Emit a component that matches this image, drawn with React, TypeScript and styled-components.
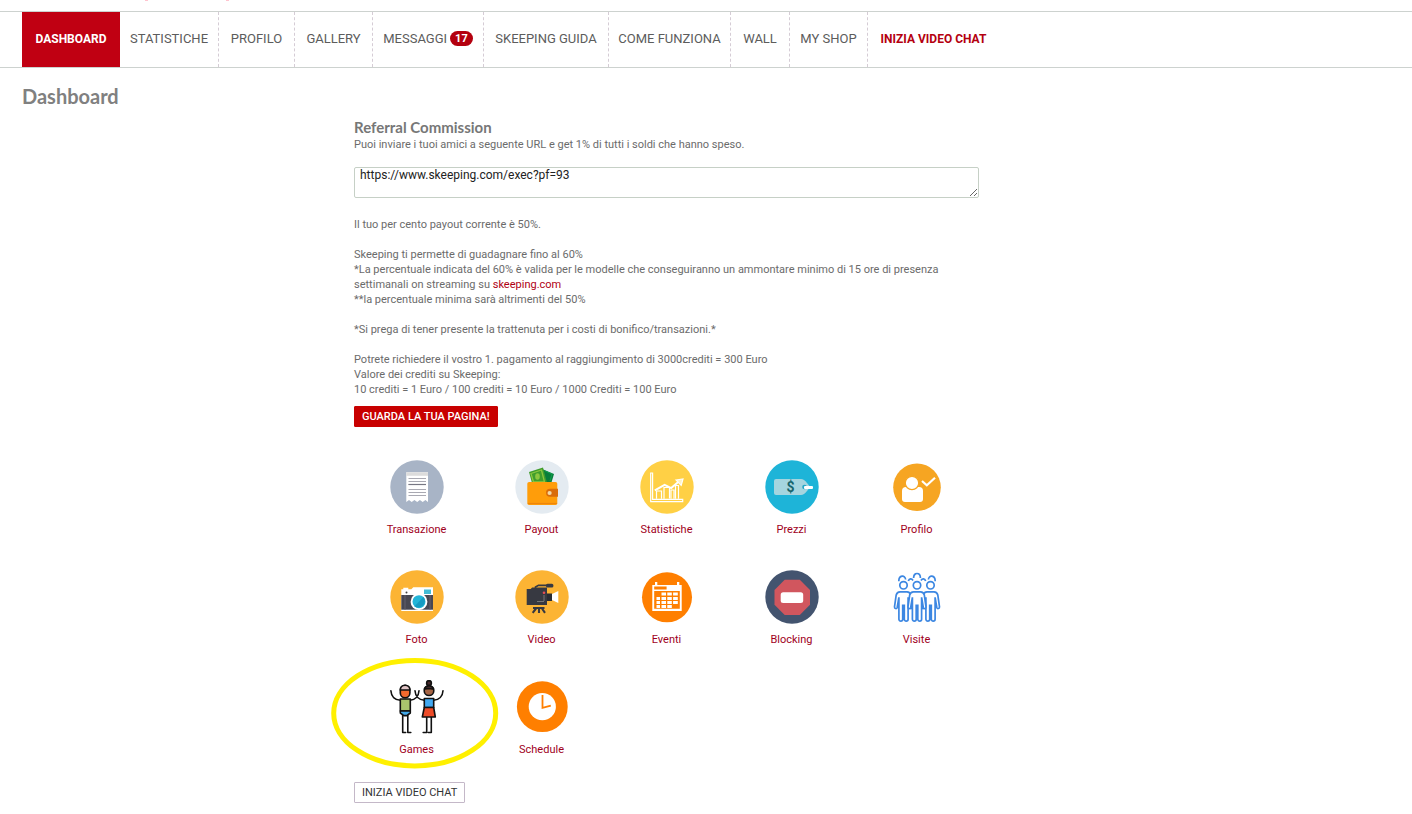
import React from 'react';
import styled, { createGlobalStyle, css } from 'styled-components';

const GlobalStyle = createGlobalStyle`
  *, *::before, *::after { box-sizing: border-box; }
  body {
    margin: 0;
    background: #fff;
    color: #6b6b6b;
    font: 11px/15px Roboto, "Liberation Sans", sans-serif;
  }
`;

const TopStrip = styled.header`
  display: flex;
  gap: 78px;
  height: 11px;
  padding-left: 145px;
`;

const TopMark = styled.span`
  width: 3px;
  height: 1px;
  background: #ffc4cf;
`;

const Nav = styled.nav`
  border-top: 1px solid #cdd2cf;
  border-bottom: 1px solid #cdd2cf;
  padding: 0 22px;
`;

const NavList = styled.ul`
  display: flex;
  margin: 0;
  padding: 0;
  list-style: none;
`;

const NavItem = styled.li<{ $width: number }>`
  flex: 0 0 ${(p) => p.$width}px;
  border-right: 1px dashed #d5ccd5;
  &:first-child,
  &:last-child { border-right: 0; }
`;

const NavLink = styled.a<{ $tone?: 'active' | 'accent' }>`
  display: flex;
  align-items: center;
  justify-content: center;
  gap: 3px;
  height: 55px;
  padding-bottom: 2px;
  color: #5c5c5c;
  font-size: 13px;
  line-height: 16px;
  white-space: nowrap;
  text-decoration: none;
  ${(p) => p.$tone === 'active' && css`
    background: #c00012;
    color: #fff;
    font-size: 12px;
    font-weight: 700;
  `}
  ${(p) => p.$tone === 'accent' && css`
    color: #b4000f;
    font-size: 12px;
    font-weight: 700;
  `}
`;

const Badge = styled.span`
  padding: 0 5px;
  border-radius: 8px;
  background: #b4000f;
  color: #fff;
  font-size: 11px;
  font-weight: 700;
  line-height: 15px;
`;

const Page = styled.main`
  max-width: 1333px;
  padding: 15px 22px 11px;
`;

const PageTitle = styled.h1`
  margin: 0;
  color: #808080;
  font: 700 20px/26px Lato, sans-serif;
`;

const Content = styled.section`
  max-width: 625px;
  margin: 9px auto 0;
`;

const SectionTitle = styled.h2`
  margin: 0 0 1px;
  color: #777;
  font: 700 15px/18px Lato, sans-serif;
`;

const Text = styled.p<{ $last?: boolean }>`
  margin: 0 0 ${(p) => (p.$last ? 9 : 15)}px;
`;

const UrlBox = styled.textarea`
  display: block;
  width: 100%;
  height: 31px;
  margin-bottom: 19px;
  padding: 0 5px;
  border: 1px solid #c6d0c6;
  border-radius: 2px;
  color: #222;
  font: inherit;
  font-size: 12px;
  overflow: hidden;
  resize: both;
`;

const TextLink = styled.a`
  color: #b00014;
  text-decoration: none;
`;

const Button = styled.button<{ $primary?: boolean }>`
  display: block;
  height: 21px;
  padding: 0 7px;
  border: 1px solid #c4b8c8;
  border-radius: 1px;
  background: #fff;
  color: #333;
  font: inherit;
  line-height: 19px;
  cursor: pointer;
  ${(p) => p.$primary && css`
    border-color: #c80000;
    background: #c80000;
    color: #fff;
    font-weight: 500;
  `}
`;

const Tiles = styled.div`
  display: grid;
  grid-template-columns: repeat(5, 1fr);
  row-gap: 33px;
  margin: 33px 0 25px;
`;

const Tile = styled.a`
  position: relative;
  display: flex;
  flex-direction: column;
  align-items: center;
  gap: 8px;
  color: #a0001c;
  text-decoration: none;
`;

const TileIcon = styled.svg`
  display: block;
  width: 54px;
  height: 54px;
`;

const Ring = styled.svg`
  position: absolute;
  top: -22px;
  left: -23px;
  width: 168px;
  height: 111px;
  pointer-events: none;
`;

const navItems: { label: string; width: number; tone?: 'active' | 'accent'; count?: number }[] = [
  { label: 'DASHBOARD', width: 98, tone: 'active' },
  { label: 'STATISTICHE', width: 99 },
  { label: 'PROFILO', width: 76 },
  { label: 'GALLERY', width: 78 },
  { label: 'MESSAGGI', width: 111, count: 17 },
  { label: 'SKEEPING GUIDA', width: 125 },
  { label: 'COME FUNZIONA', width: 122 },
  { label: 'WALL', width: 59 },
  { label: 'MY SHOP', width: 78 },
  { label: 'INIZIA VIDEO CHAT', width: 131, tone: 'accent' },
];

const Receipt = () => (
  <>
    <circle cx="27" cy="27" r="26.7" fill="#a8b4c6" />
    <path d="M16.3 12.3H38V42l-2.6-2-2.7 2-2.8-2-2.7 2-2.8-2-2.7 2-2.7-2-2.7 2Z" fill="#fff" />
    <path d="M16.3 12.3H38v3.5H16.3Z" fill="#dcdcdc" />
    <path d="M18.5 18.5H36M18.5 21.5H36M18.5 24.5H36M18.5 29.5H36M18.5 32.5H36M18.5 35.5H36" stroke="#a9a9b2" strokeWidth="1.2" />
    <path d="M18.5 24.5H36" stroke="#777783" strokeWidth="1.2" />
  </>
);

const Wallet = () => (
  <>
    <circle cx="27" cy="27" r="26.7" fill="#e4ebf1" />
    <path d="m27 9 12 5-3 10H24Z" fill="#087d3b" />
    <path d="m30 11 7 3-2 7" fill="none" stroke="#0fa04c" />
    <path d="m14 12 14-4.6 4 15.6H17Z" fill="#3f9d2c" />
    <path d="m16 13.5 10.5-3.5 3 12H18.5Z" fill="none" stroke="#8cc63f" strokeWidth="1.3" />
    <ellipse cx="22.5" cy="16.5" rx="2.3" ry="3.2" fill="#8cc63f" />
    <rect x="12.3" y="22" width="30" height="23" rx="1.8" fill="#ff9d0a" />
    <path d="M13 43.5h29" stroke="#ee850b" strokeWidth="1.2" />
    <path d="M35 28.8h8v8h-8a4 4 0 0 1 0-8Z" fill="#d96d0b" />
    <circle cx="34.6" cy="33" r="2.1" fill="#f1d7a5" />
  </>
);

const Growth = () => (
  <>
    <circle cx="27" cy="27" r="26.7" fill="#ffd045" />
    <g fill="none" stroke="#fff" strokeWidth="1.2">
      <path d="M10.7 13v28.7h32v-2.4H12.6V13Z" />
      <path d="M16.5 38.7V31h5v7.7M24 38.7V27.5h5.5v11M31 38.7V30h3v8.7M35.5 38.7V25.5h3v13.2" />
      <path d="m14.8 30.3 9.8-5.5 6.6 3.3 7.6-6.6" strokeWidth="2" />
      <path d="m36 20 7-1-1.8 6.4Z" fill="#fff3c9" />
    </g>
  </>
);

const PriceTag = () => (
  <>
    <circle cx="27" cy="27" r="26.7" fill="#1eb4d8" />
    <path d="M11 19h25c2 0 4 1.5 6 4l2 2.5v3L42 31c-2 2.5-4 4-6 4H11a2 2 0 0 1-2-2V21a2 2 0 0 1 2-2Z" fill="#a5d5df" />
    <circle cx="39.5" cy="27" r="2.3" fill="#26a7c7" />
    <rect x="39" y="26" width="9" height="3" rx="1" fill="#fff" />
    <text x="25.5" y="32" textAnchor="middle" fill="#17666d" fontFamily="Roboto, sans-serif" fontSize="14" fontWeight="700">$</text>
  </>
);

const UserCheck = () => (
  <>
    <circle cx="27" cy="27.3" r="23.8" fill="#f6a522" />
    <path d="M16 27h13a4 4 0 0 1 4 4v8a3 3 0 0 1-3 3H15a3 3 0 0 1-3-3v-8a4 4 0 0 1 4-4Z" fill="#fff" />
    <circle cx="22" cy="23" r="6.7" fill="#fff" stroke="#f6a522" strokeWidth="1.2" />
    <path d="m32 21 4.8 4.3 8.2-7.6" fill="none" stroke="#fff" strokeWidth="2.2" />
  </>
);

const Camera = () => (
  <>
    <circle cx="27" cy="27" r="26.7" fill="#fcb434" />
    <path d="M11.3 19.2h2v-1.5h5v1.5h3l2-1.9h19.7V41H11.3Z" fill="#fff" />
    <path d="M11.3 25H43v14.7H11.3Z" fill="#474752" />
    <path d="M15 25v14.7M40 25v14.7" stroke="#65616d" />
    <circle cx="16.5" cy="22.5" r="1" fill="#444" />
    <path d="M34 19.5h7V24h-7Z" fill="#42bcd6" />
    <circle cx="29" cy="31.7" r="8.4" fill="#fff" />
    <circle cx="29" cy="31.7" r="6.5" fill="#22b5d8" />
    <path d="M24.5 36.2 33.5 27a6.5 6.5 0 0 1-9 9.2Z" fill="#159bc1" />
  </>
);

const Camcorder = () => (
  <>
    <circle cx="27" cy="27" r="26.7" fill="#fcb434" />
    <path d="M11.7 19h4l1.4-1.4H32V35H11.7Z" fill="#373941" />
    <path d="M20.5 19v-2l3-1.7H32" fill="none" stroke="#373941" strokeWidth="1.7" />
    <rect x="31" y="13.7" width="7.4" height="3.8" rx="1.5" fill="#373941" />
    <path d="M32 23.5h5v7.5h-5Z" fill="#292c33" />
    <path d="m37 24 6.3-3v12L37 30Z" fill="#fff" />
    <path d="M22 31.5h7M29 25v6" stroke="#777" />
    <circle cx="29" cy="22.8" r="1.3" fill="#e84e54" />
    <path d="M18 37h11.5v2H18Z" fill="#373941" />
    <path d="m21 38.5-3.3 4.4M24 38.5V43M27 38.5l3 4.4" stroke="#373941" strokeWidth="2.1" />
  </>
);

const CalendarGrid = () => (
  <>
    <circle cx="27" cy="27.3" r="25" fill="#ff7f00" />
    <path d="M15 12h2.3v3H37v-3h2.3v3h2.4v26H12.3V15H15Z" fill="#fff" />
    <path d="M14.2 16.6h12.4v3H14.2ZM14.2 21h25.6v17.8H14.2Z" fill="#ff7f00" />
    <path d="M21.5 22.4H26v3h-4.5ZM27.3 22.4h4.5v3h-4.5ZM33.1 22.4h4.7v3h-4.7ZM16.5 27H20v3h-3.5ZM21.5 27H26v3h-4.5ZM27.3 27h4.5v3h-4.5ZM33.1 27h4.7v3h-4.7ZM16.5 31H20v3h-3.5ZM21.5 31H26v3h-4.5ZM27.3 31h4.5v3h-4.5ZM33.1 31h4.7v3h-4.7ZM16.5 35H20v3h-3.5ZM21.5 35H26v3h-4.5ZM27.3 35h4.5v3h-4.5Z" fill="#fff" />
  </>
);

const StopSign = () => (
  <>
    <circle cx="27" cy="27" r="26.7" fill="#43546f" />
    <path d="M19.7 9.7h15.1L45 20v14.8L34.8 45H19.7L9.5 34.8V20Z" fill="#d1565e" />
    <rect x="15.7" y="22.3" width="22.5" height="10.6" rx="2.5" fill="#fff" />
  </>
);

const personOutline =
  'M-3.5 6.5h7c2 0 3.3 1 3.8 3.2L9 21.5c.2 2-2.2 2.4-2.7.6L4.6 12v22c0 2.3-3.8 2.3-3.8 0V20h-1.6v14c0 2.3-3.8 2.3-3.8 0V12l-1.7 10.1c-.5 1.8-2.9 1.4-2.7-.6L-7.3 9.7C-6.8 7.5-5.5 6.5-3.5 6.5Z';

const Crowd = () => (
  <g fill="#fff" stroke="#3c87e2" strokeWidth="1.7">
    <path d="M8.8 11.3c0-6.4 6.4-6.6 6.8-1.8M23.6 8c0-6 6.8-6 6.8 0M38.4 9.5c.4-4.8 6.8-4.6 6.8 1.8M18.3 11c1-2.8 3.5-2.8 4.7-.5M31 10.5c1.2-2.3 3.7-2.3 4.7.5" fill="none" />
    {[13.5, 40.5, 27].map((x) => (
      <g key={x} transform={`translate(${x} 15.3)`}>
        <path d={personOutline} />
        <circle r="3.7" />
      </g>
    ))}
  </g>
);

const Dancers = () => (
  <g stroke="#111" strokeWidth="1.6" strokeLinecap="round" strokeLinejoin="round">
    <path d="M10.3 20.3C5 20 1.2 16.5.9 10.8M20 20.3c5-.5 8.7-4 9-9.5M34.3 20.3c-5.2-.4-9-4-9.3-9.5M43.7 20.3c5.3-.4 9-4 9.3-9.5" fill="none" />
    <path d="M12.7 35v17.5h3M17.8 35v17.5h3M36.7 37v15.5h-3.5M41.3 37v15.5h-3" fill="none" />
    <path d="M10.3 10a4.8 4.8 0 0 1 9.6 0v3a4.8 4.8 0 0 1-9.6 0Z" fill="#f26a2e" />
    <path d="M10.3 10a4.8 4.8 0 0 1 9.6 0Z" fill="#dfc3c5" />
    <path d="M10.3 19h10v12h-10Z" fill="#a9c56d" />
    <path d="M10.3 31h10v2l-3.5 2.6h-3L10.3 33Z" fill="#42a8e8" />
    <circle cx="39" cy="3" r="2.4" fill="#49292b" />
    <circle cx="39" cy="10.7" r="4.8" fill="#a66545" />
    <path d="M34.4 9a4.9 4.9 0 0 1 9.2 0c-3 0-6-1-9.2 0Z" fill="#49292b" />
    <path d="M34.3 18.5h9.4v9h-9.4Z" fill="#42a8f0" />
    <path d="M34.3 27.5h9.4L45.3 37h-13Z" fill="#ed4b28" />
  </g>
);

const Clock = () => (
  <>
    <circle cx="27.3" cy="26.7" r="25.4" fill="#ff7f00" />
    <circle cx="27.3" cy="26.7" r="13.6" fill="#fff" />
    <path d="M27.5 15v12.8l8.3-2.2" fill="none" stroke="#ff7f00" strokeWidth="1.8" />
  </>
);

const tiles: { label: string; Icon: () => React.ReactElement; ringed?: boolean }[] = [
  { label: 'Transazione', Icon: Receipt },
  { label: 'Payout', Icon: Wallet },
  { label: 'Statistiche', Icon: Growth },
  { label: 'Prezzi', Icon: PriceTag },
  { label: 'Profilo', Icon: UserCheck },
  { label: 'Foto', Icon: Camera },
  { label: 'Video', Icon: Camcorder },
  { label: 'Eventi', Icon: CalendarGrid },
  { label: 'Blocking', Icon: StopSign },
  { label: 'Visite', Icon: Crowd },
  { label: 'Games', Icon: Dancers, ringed: true },
  { label: 'Schedule', Icon: Clock },
];

export default function App() {
  return (
    <>
      <GlobalStyle />
      <TopStrip>
        <TopMark />
        <TopMark />
      </TopStrip>
      <Nav>
        <NavList>
          {navItems.map(({ label, width, tone, count }) => (
            <NavItem key={label} $width={width}>
              <NavLink href="#" $tone={tone}>
                {label}
                {count && <Badge>{count}</Badge>}
              </NavLink>
            </NavItem>
          ))}
        </NavList>
      </Nav>
      <Page>
        <PageTitle>Dashboard</PageTitle>
        <Content>
          <SectionTitle id="referral">Referral Commission</SectionTitle>
          <Text>Puoi inviare i tuoi amici a seguente URL e get 1% di tutti i soldi che hanno speso.</Text>
          <UrlBox aria-labelledby="referral" defaultValue="https://www.skeeping.com/exec?pf=93" />
          <Text>Il tuo per cento payout corrente è 50%.</Text>
          <Text>
            Skeeping ti permette di guadagnare fino al 60%
            <br />
            *La percentuale indicata del 60% è valida per le modelle che conseguiranno un ammontare minimo di 15 ore di presenza
            <br />
            settimanali on streaming su <TextLink href="#">skeeping.com</TextLink>
            <br />
            **la percentuale minima sarà altrimenti del 50%
          </Text>
          <Text>*Si prega di tener presente la trattenuta per i costi di bonifico/transazioni.*</Text>
          <Text $last>
            Potrete richiedere il vostro 1. pagamento al raggiungimento di 3000crediti = 300 Euro
            <br />
            Valore dei crediti su Skeeping:
            <br />
            10 crediti = 1 Euro / 100 crediti = 10 Euro / 1000 Crediti = 100 Euro
          </Text>
          <Button type="button" $primary>GUARDA LA TUA PAGINA!</Button>
          <Tiles>
            {tiles.map(({ label, Icon, ringed }) => (
              <Tile key={label} href="#">
                <TileIcon viewBox="0 0 54 54" aria-hidden="true">
                  <Icon />
                </TileIcon>
                {label}
                {ringed && (
                  <Ring viewBox="0 0 168 111" aria-hidden="true">
                    <ellipse cx="83.7" cy="55.2" rx="81" ry="52.7" fill="none" stroke="#fff000" strokeWidth="5" />
                  </Ring>
                )}
              </Tile>
            ))}
          </Tiles>
          <Button type="button">INIZIA VIDEO CHAT</Button>
        </Content>
      </Page>
    </>
  );
}
